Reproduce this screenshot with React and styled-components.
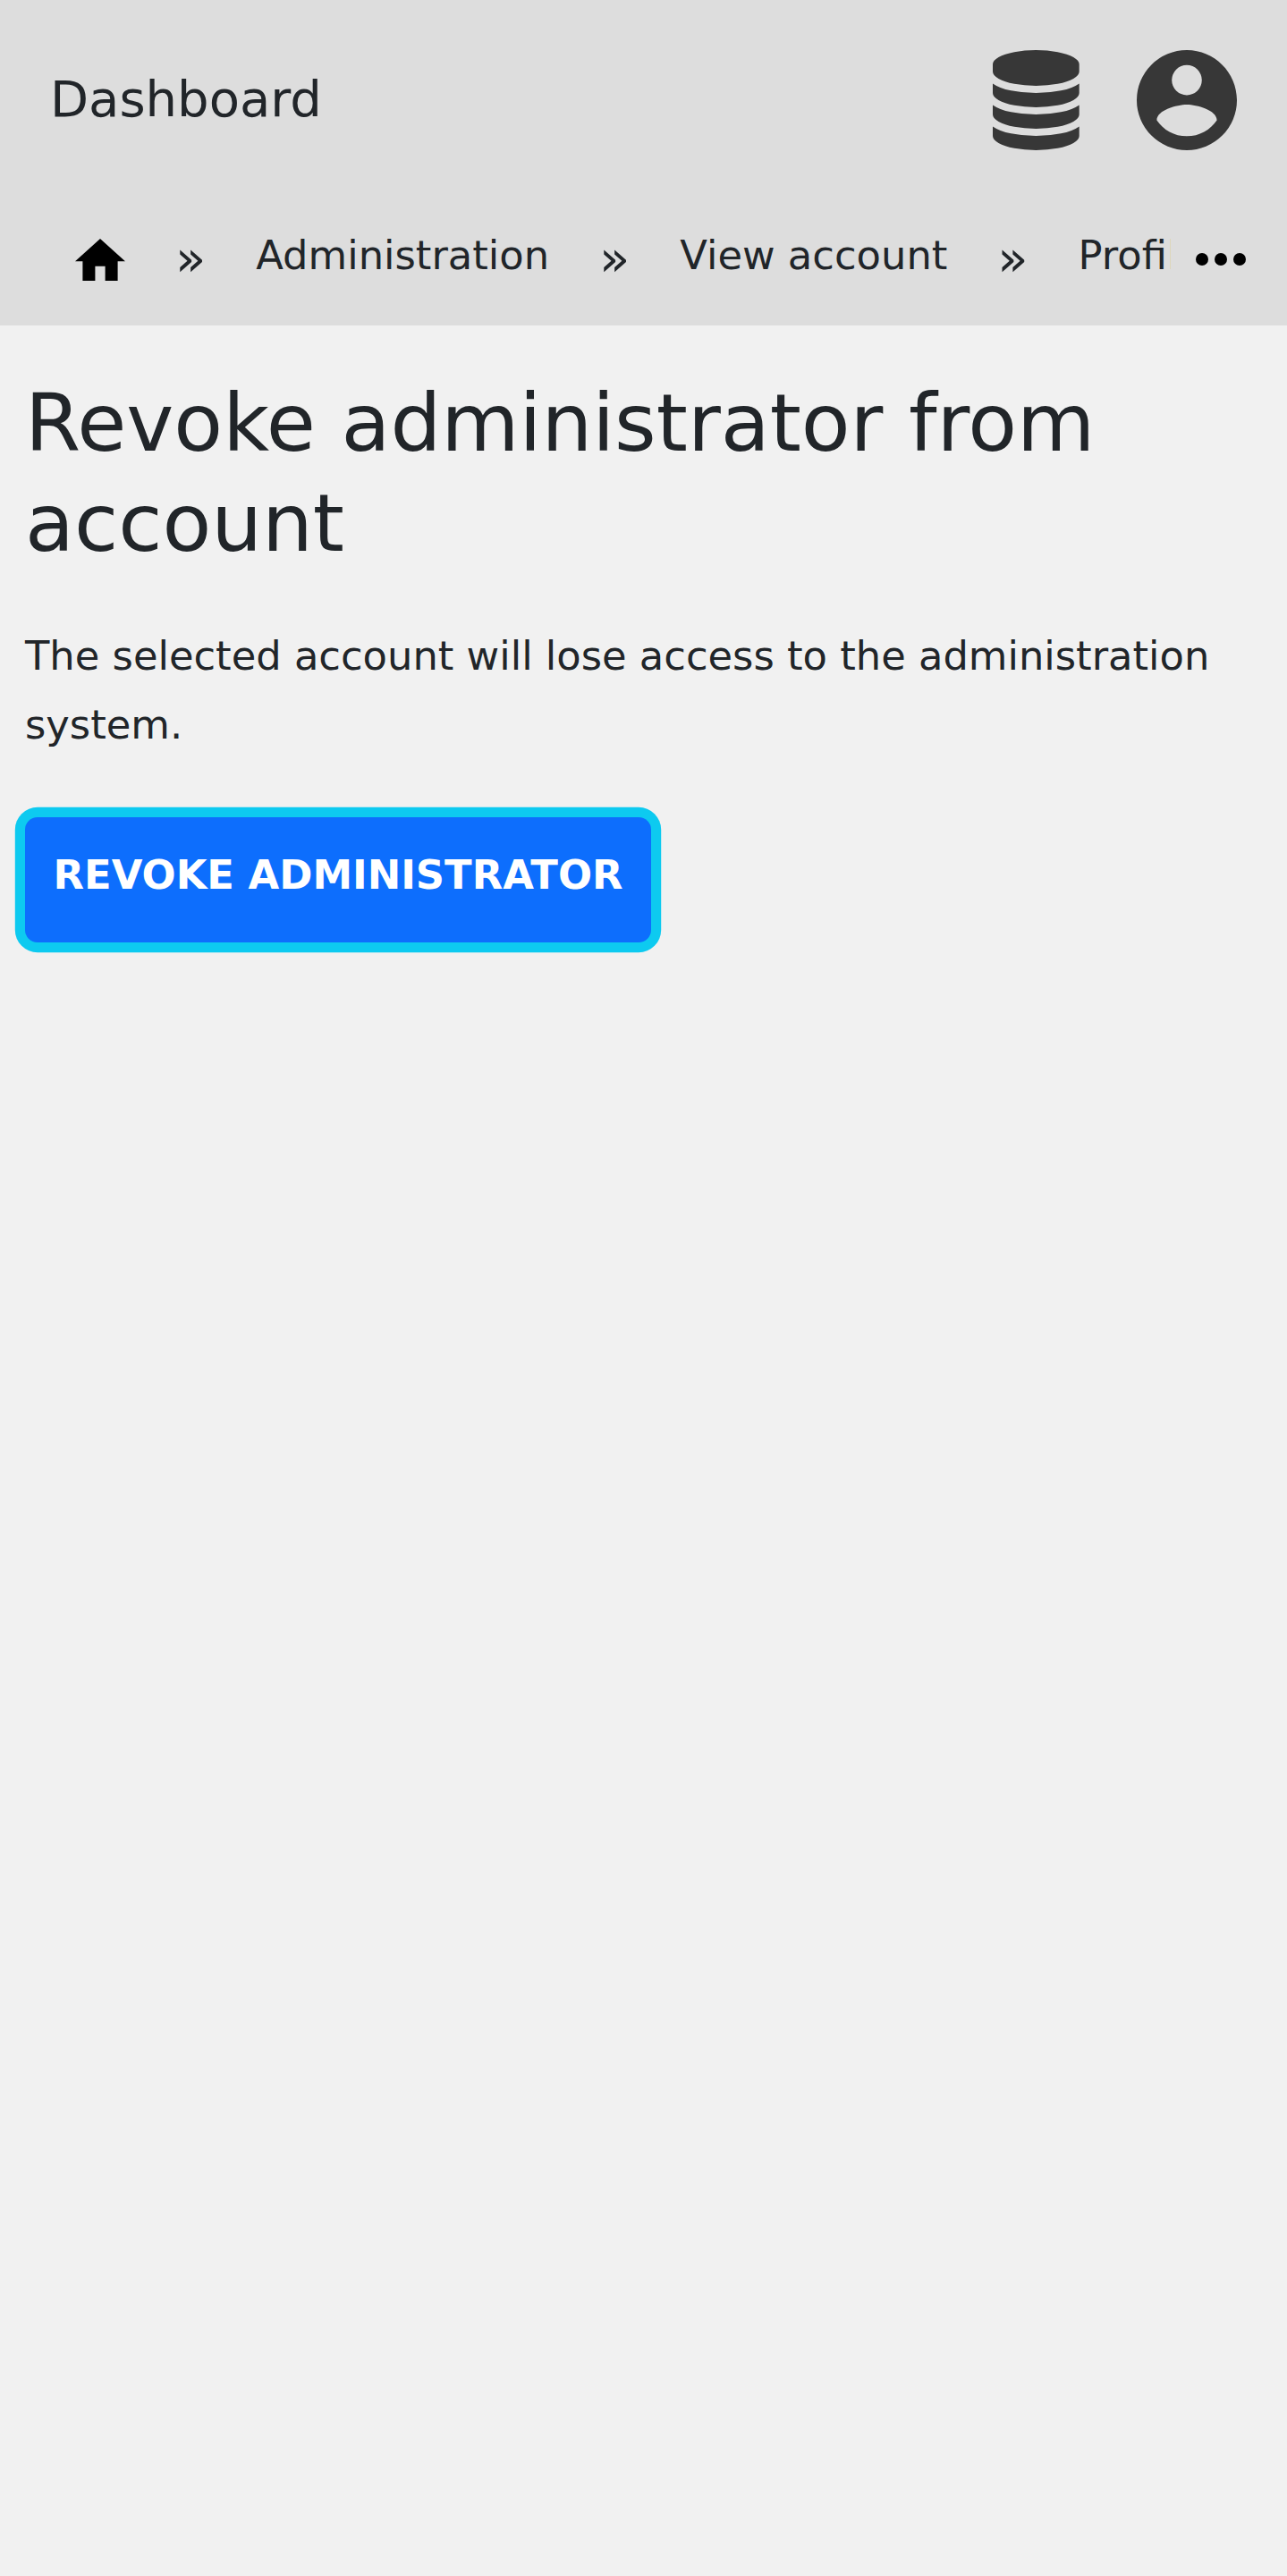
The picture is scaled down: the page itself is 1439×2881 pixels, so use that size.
import React from "react";
import styled, { createGlobalStyle } from "styled-components";

const GlobalStyle = createGlobalStyle`
  *, *::before, *::after { box-sizing: border-box; }
  body {
    margin: 0;
    background: #f1f1f1;
    color: #212529;
    font-family: "DejaVu Sans", sans-serif;
    font-size: 44.8px;
    line-height: 76.16px;
  }
`;

const Page = styled.div`
  min-height: 2881px;
`;

const Header = styled.header`
  height: 364px;
  background: #ddd;
`;

const TopBar = styled.div`
  display: flex;
  align-items: center;
  justify-content: space-between;
  height: 224px;
  padding: 0 56px;
`;

const Brand = styled.a`
  font-size: 56px;
  line-height: 84px;
  padding-bottom: 1.6px;
`;

const Actions = styled.div`
  display: flex;
  align-items: center;
  gap: 64.3px;
  color: #373737;
`;

const Icon = styled.svg`
  display: block;
  flex: none;
  width: ${(p) => p.$w}px;
  height: ${(p) => p.$h}px;
  fill: currentColor;
`;

const CrumbBar = styled.nav`
  display: flex;
  align-items: flex-start;
  justify-content: space-between;
  padding: 23.9px 46px 0 84px;
`;

const CrumbList = styled.ol`
  display: flex;
  width: 1224.5px;
  margin: 0;
  padding: 0;
  overflow: hidden;
  list-style: none;
  white-space: nowrap;
`;

const Crumb = styled.li`
  display: flex;
  flex: none;

  & + &::before {
    content: "»";
    margin: 2.9px 56px 0;
    font-size: 56px;
  }
`;

const HomeLink = styled.a`
  padding-top: 18.9px;
  color: #000;
`;

const MoreButton = styled.button`
  padding: 35.1px 0 0;
  border: 0;
  background: none;
  color: #000;
`;

const Main = styled.main`
  padding: 53px 28px 0;
`;

const Title = styled.h1`
  margin: 0 0 55.4px;
  font-size: 89.6px;
  font-weight: 400;
  line-height: 112px;
`;

const Description = styled.p`
  margin: 0 0 64.8px;
`;

const PrimaryButton = styled.button`
  display: block;
  height: 140px;
  padding: 0 31.6px 9px;
  border: 0;
  border-radius: 14px;
  background: #0d6efd;
  color: #fff;
  font: 700 44.8px/76.16px "DejaVu Sans", sans-serif;
  text-transform: uppercase;
  box-shadow: 0 0 0 11.2px #0dcaf0;
`;

const DatabaseIcon = () => (
  <Icon $w={96.7} $h={112} viewBox="0 0 1536 1792" preserveAspectRatio="none">
    <path d="M768 768q237 0 443-43t325-127v170q0 69-103 128t-280 93.5-385 34.5-385-34.5-280-93.5-103-128v-170q119 84 325 127t443 43zm0 768q237 0 443-43t325-127v170q0 69-103 128t-280 93.5-385 34.5-385-34.5-280-93.5-103-128v-170q119 84 325 127t443 43zm0-384q237 0 443-43t325-127v170q0 69-103 128t-280 93.5-385 34.5-385-34.5-280-93.5-103-128v-170q119 84 325 127t443 43zm0-1152q208 0 385 34.5t280 93.5 103 128v128q0 69-103 128t-280 93.5-385 34.5-385-34.5-280-93.5-103-128v-128q0-69 103-128t280-93.5 385-34.5z" />
  </Icon>
);

const AccountIcon = () => (
  <Icon $w={112} $h={112} viewBox="2 2 20 20">
    <path d="M12,19.2C9.5,19.2 7.29,17.92 6,16C6.03,14 10,12.9 12,12.9C14,12.9 17.97,14 18,16C16.71,17.92 14.5,19.2 12,19.2M12,5A3,3 0 0,1 15,8A3,3 0 0,1 12,11A3,3 0 0,1 9,8A3,3 0 0,1 12,5M12,2A10,10 0 0,0 2,12A10,10 0 0,0 12,22A10,10 0 0,0 22,12C22,6.47 17.5,2 12,2Z" />
  </Icon>
);

const HomeIcon = () => (
  <Icon $w={56} $h={47.6} viewBox="2 3 20 17">
    <path d="M10 20v-6h4v6h5v-8h3L12 3 2 12h3v8z" />
  </Icon>
);

const MoreIcon = () => (
  <Icon $w={56} $h={14} viewBox="0 0 20 5">
    <circle cx="2.5" cy="2.5" r="2.5" />
    <circle cx="10" cy="2.5" r="2.5" />
    <circle cx="17.5" cy="2.5" r="2.5" />
  </Icon>
);

export default function App() {
  return (
    <Page>
      <GlobalStyle />
      <Header>
        <TopBar>
          <Brand>Dashboard</Brand>
          <Actions>
            <DatabaseIcon />
            <AccountIcon />
          </Actions>
        </TopBar>
        <CrumbBar>
          <CrumbList>
            <Crumb>
              <HomeLink>
                <HomeIcon />
              </HomeLink>
            </Crumb>
            <Crumb>Administration</Crumb>
            <Crumb>View account</Crumb>
            <Crumb>Profile</Crumb>
          </CrumbList>
          <MoreButton>
            <MoreIcon />
          </MoreButton>
        </CrumbBar>
      </Header>
      <Main>
        <Title>Revoke administrator from account</Title>
        <Description>
          The selected account will lose access to the administration system.
        </Description>
        <PrimaryButton>Revoke administrator</PrimaryButton>
      </Main>
    </Page>
  );
}
